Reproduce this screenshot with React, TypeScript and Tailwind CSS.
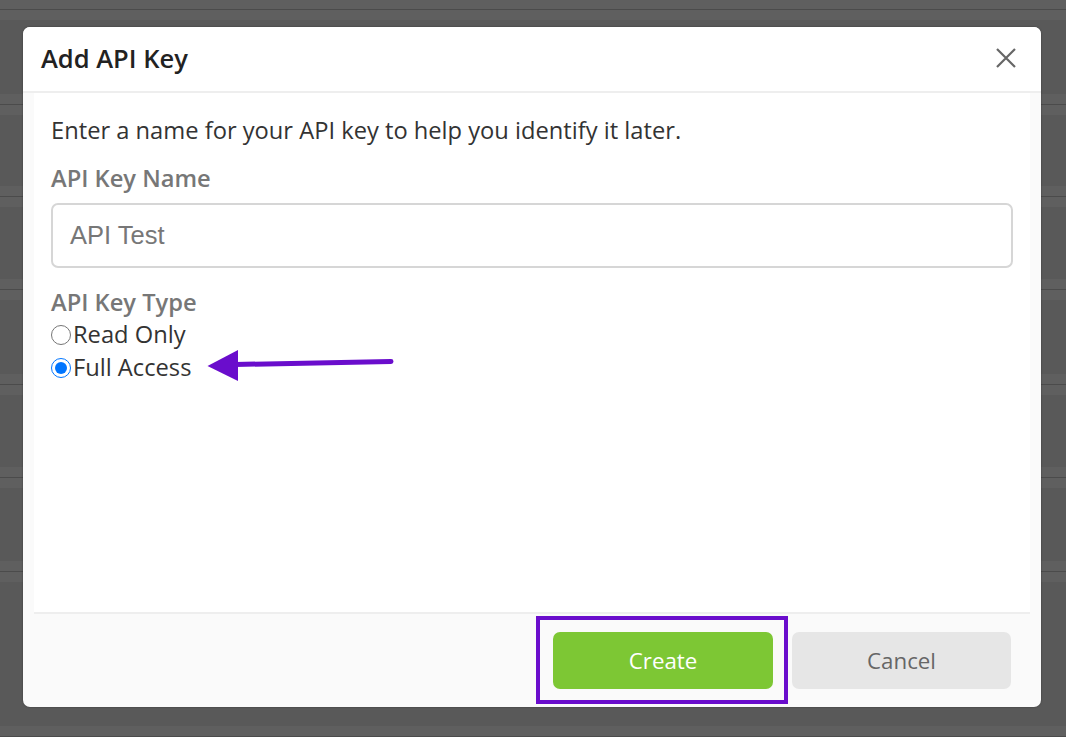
import React from "react";

const rows = [10, 95, 92, 93, 95, 93, 94, 165];

function ArrowMark() {
  return (
    <svg width="190" height="40" viewBox="0 0 190 40" className="ml-[14px] -mt-[4px]">
      <path d="M30 18.5 L186 15.5" stroke="#6a0dcc" strokeWidth="5" strokeLinecap="round" />
      <path d="M2.5 20 L33 4 L33 35 Z" fill="#6a0dcc" />
    </svg>
  );
}

export default function App() {
  return (
    <div className="relative h-[737px] w-[1066px] overflow-hidden bg-[#595959] font-['Open_Sans',sans-serif]">
      {/* page behind the modal */}
      <div className="flex flex-col">
        {rows.map((h, i) => (
          <div key={i} className="border-b border-[#4b4b4b] flex flex-col justify-between" style={{ height: h }}>
            <div className="h-[10px] bg-[#5f5f5f]" />
            <div className="h-[10px] bg-[#5f5f5f]" />
          </div>
        ))}
      </div>

      <div className="absolute inset-0 pl-[23px] pt-[27px]">
        <div className="w-[1018px] h-[680px] bg-[#fafafa] rounded-[7px] flex flex-col shadow-[0_0_2px_rgba(0,0,0,0.4)]">
          <div className="h-[66px] shrink-0 bg-white rounded-t-[7px] border-b-2 border-[#eeeeee] flex items-center justify-between pl-[18px] pr-[24px]">
            <h2 className="text-[25.5px] font-semibold text-[#222] -mt-[2px]">Add API Key</h2>
            <svg width="22" height="22" viewBox="0 0 22 22" className="-mt-[2px]">
              <path d="M2 2 L20 20 M20 2 L2 20" stroke="#666" strokeWidth="2.2" />
            </svg>
          </div>

          <div className="mx-[11px] flex-1 bg-white border-b-2 border-[#eeeeee] px-[17px] pt-[21px]">
            <p className="text-[23.7px] text-[#333] leading-[32px]">
              Enter a name for your API key to help you identify it later.
            </p>
            <label className="block mt-[16px] text-[23.7px] font-semibold text-[#777] leading-[32px]">API Key Name</label>
            <div className="mt-[9px] h-[65px] border-2 border-[#d6d6d6] rounded-[7px] flex items-center pl-[17px]">
              <span className="font-['Liberation_Sans',sans-serif] text-[25.5px] text-[#777]">API Test</span>
            </div>
            <label className="block mt-[18px] text-[23.7px] font-semibold text-[#777] leading-[32px]">API Key Type</label>
            <div className="flex items-center h-[33px] text-[23.7px] text-[#333]">
              <input type="radio" name="t" className="w-[20px] h-[20px] m-0 mr-[2px] accent-[#0075ff]" readOnly />
              <span>Read Only</span>
            </div>
            <div className="flex items-center h-[33px] text-[23.7px] text-[#333]">
              <input type="radio" name="t" defaultChecked className="w-[20px] h-[20px] m-0 mr-[2px] accent-[#0075ff]" />
              <span>Full Access</span>
              <ArrowMark />
            </div>
          </div>

          <div className="h-[93px] shrink-0 flex items-start justify-end gap-[19px] pr-[30px] pt-[18px]">
            <div className="relative">
              <button className="w-[220px] h-[57px] rounded-[7px] bg-[#7dc734] text-white text-[22.3px]">Create</button>
              <div className="absolute -left-[17px] -right-[15px] -top-[16px] -bottom-[15px] border-[4px] border-[#6a0dcc]" />
            </div>
            <button className="w-[219px] h-[57px] rounded-[7px] bg-[#e6e6e6] text-[#666] text-[22.3px]">Cancel</button>
          </div>
        </div>
      </div>
    </div>
  );
}
